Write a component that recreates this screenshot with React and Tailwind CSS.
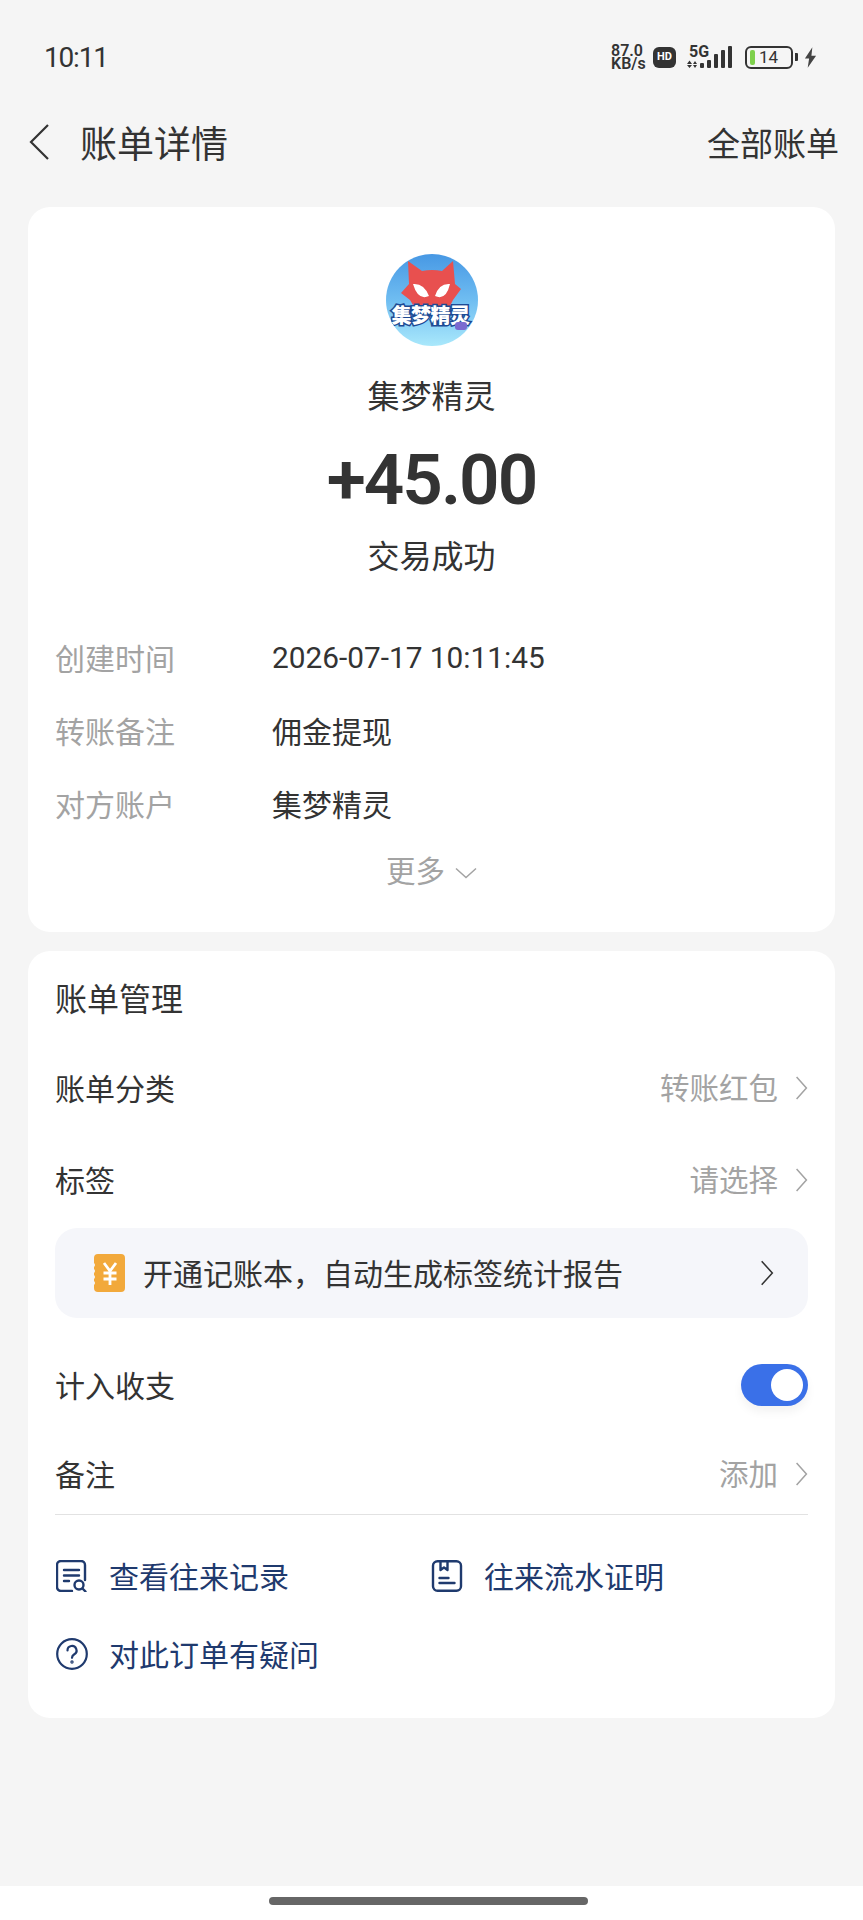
import React from 'react'

const CJK = 'font-["Noto_Sans_CJK_SC","Noto_Sans",sans-serif]'

function Chevron({ className, dir = 'right', strokeWidth = 2 }) {
  const d = dir === 'right' ? 'M3 2l9 10-9 10' : dir === 'left' ? 'M19 1L2 18l17 17' : 'M2 3l10 9 10-9'
  const vb = dir === 'left' ? '0 0 20 36' : dir === 'down' ? '1 2 22 11' : '2 1 11 22'
  return (
    <svg viewBox={vb} fill="none" stroke="currentColor" strokeWidth={strokeWidth} className={`overflow-visible ${className}`}>
      <path d={d} />
    </svg>
  )
}

function StatusBar() {
  return (
    <div className="h-[88px] pt-[41px] pl-[44px] pr-[46px] flex items-start justify-between text-[#333]">
      <span className="font-['Roboto',sans-serif] text-[28px] tracking-[-1.2px] leading-[36px] -mt-[1px]">10:11</span>
      <div className="flex items-center h-[26px] mt-[3px]">
        <div className="font-['Roboto',sans-serif] font-semibold text-[16px] leading-[13px] w-[38px] text-[#333]">
          <div>87.0</div>
          <div>KB/s</div>
        </div>
        <div className="ml-[4px] w-[23px] h-[21px] rounded-[6px] bg-[#333] text-white text-[11px] font-bold font-['Roboto',sans-serif] flex items-center justify-center">HD</div>
        <svg viewBox="0 0 48 24" className="ml-[10px] w-[48px] h-[24px] overflow-visible">
          <text x="3" y="12" fontFamily="Roboto" fontWeight="700" fontSize="16" fill="#333">5G</text>
          <g fill="#333">
            <path d="M1 19l2.500-3.500L6 19zM1 20h5l-2.500 3zM7 19l2-3 2 3zM7 20h4l-2 3z" />
            <rect x="14" y="18" width="4" height="5" rx="1" />
            <rect x="21" y="15" width="4" height="8" rx="1" />
            <rect x="28" y="9" width="4" height="14" rx="1" />
            <rect x="35" y="5" width="4" height="18" rx="1" />
            <rect x="42" y="1" width="4" height="22" rx="1" />
          </g>
        </svg>
        <div className="ml-[11px] w-[48px] h-[23px] rounded-[6px] border-2 border-[#333] flex items-center pl-[3px]">
          <div className="w-[5px] h-[15px] rounded-[2px] bg-[#7ed04c]" />
          <span className="ml-[4px] font-['Roboto',sans-serif] text-[17px] leading-none text-[#333]">14</span>
        </div>
        <div className="ml-[2px] w-[3px] h-[8px] rounded-r-[1px] bg-[#333]" />
        <svg viewBox="0 0 14 22" className="ml-[6px] w-[13px] h-[21px]">
          <path d="M9 0L1 12h4.500L4 22l9-13H8z" fill="#444" />
        </svg>
      </div>
    </div>
  )
}

function Header() {
  return (
    <div className="mt-[17px] h-[74px] flex items-center pl-[29px] pr-[24px] text-[#333]">
      <Chevron dir="left" className="w-[20px] h-[36px]" strokeWidth={2.200} />
      <h1 className="ml-[31px] text-[37px] leading-none font-normal">账单详情</h1>
      <span className="ml-auto text-[33px] leading-none">全部账单</span>
    </div>
  )
}

function Avatar() {
  return (
    <div className="relative w-[92px] h-[92px] rounded-full overflow-hidden bg-gradient-to-b from-[#4798e4] via-[#6fbdf1] to-[#a9e8fb]">
      <svg viewBox="0 0 92 92" className="absolute inset-0 w-full h-full">
        <path d="M22 7 L36 17 Q46 15 56 17 L67 7 L69 30 L75 35 L67 46 L62 56 L30 56 L24 46 L15 39 L23 30Z" fill="#e8504f" />
        <path d="M27 30 Q38 29 43 42 Q32 47 27 30Z M64 30 Q53 29 49 42 Q60 47 64 30Z" fill="#fff" />
      </svg>
      <span className={`absolute left-[6px] top-[48px] whitespace-nowrap text-[20px] leading-[26px] font-black text-white tracking-[-0.500px] [-webkit-text-stroke:3px_#1d4a94] [paint-order:stroke_fill] ${CJK}`}>集梦精灵</span>
      <div className="absolute left-[69px] top-[68px] w-[12px] h-[8px] rounded-[3px] bg-[#7b6ad0]" />
    </div>
  )
}

function InfoRow({ label, value }) {
  return (
    <div className="h-[73px] flex items-center text-[30px] leading-none">
      <span className="w-[217px] text-[#a3a3a3]">{label}</span>
      <span className="text-[#333]">{value}</span>
    </div>
  )
}

function SummaryCard() {
  return (
    <section className="bg-white rounded-[22px] h-[725px] pt-[47px] px-[27px]">
      <div className="flex flex-col items-center text-[#333]">
        <Avatar />
        <div className="mt-[29px] h-[38px] text-[32px] leading-[38px]">集梦精灵</div>
        <div className="mt-[25px] h-[84px] font-['Roboto',sans-serif] font-semibold text-[71px] tracking-[-2px] leading-[84px] text-[#333]">+45.00</div>
        <div className="mt-[13px] h-[38px] text-[32px] leading-[38px]">交易成功</div>
      </div>
      <div className="mt-[47px]">
        <InfoRow label="创建时间" value={<span className="font-['Roboto',sans-serif] text-[29.800px]">2026-07-17 10:11:45</span>} />
        <InfoRow label="转账备注" value="佣金提现" />
        <InfoRow label="对方账户" value="集梦精灵" />
      </div>
      <div className="mt-[16px] flex items-center justify-center text-[#a3a3a3] text-[29.500px] leading-none">
        <span>更多</span>
        <Chevron dir="down" className="ml-[10px] mt-[6px] w-[22px] h-[12px]" strokeWidth={1.500} />
      </div>
    </section>
  )
}

function ManageRow({ label, value, className }) {
  return (
    <div className={`flex items-center leading-none ${className}`}>
      <span className="text-[#333] text-[30px]">{label}</span>
      <span className="ml-auto text-[#a3a3a3] text-[29.500px]">{value}</span>
      <Chevron className="ml-[17px] mt-[2px] w-[13px] h-[24px] text-[#a3a3a3]" strokeWidth={1.400} />
    </div>
  )
}

function CoinIcon() {
  return (
    <svg viewBox="0 0 32 38" className="w-[32px] h-[38px]">
      <path d="M5 0h23a4 4 0 0 1 4 4v30a4 4 0 0 1-4 4H5a4 4 0 0 1-4-4v-3q2-2 0-4v-2q2-2 0-4v-2q2-2 0-4v-2q2-2 0-4V4a4 4 0 0 1 4-4z" fill="#f2a93b" />
      <path d="M11 9l6 8 6-8M10.500 19h13M10.500 25h13M17 17v14" stroke="#fff" strokeWidth="2.800" fill="none" />
    </svg>
  )
}

function RecordIcon() {
  return (
    <svg viewBox="0 0 32 32" fill="none" stroke="#1f3a6e" strokeWidth="2.400" strokeLinecap="round" strokeLinejoin="round" className="w-[32px] h-[32px]">
      <path d="M16 31H5a4 4 0 0 1-4-4V5a4 4 0 0 1 4-4h20a4 4 0 0 1 4 4v15" />
      <path d="M8 10h15M8 15.500h15M8 21h5" />
      <circle cx="23" cy="25" r="4.500" />
      <path d="M26.500 28.500L29.500 31.500" />
    </svg>
  )
}

function ProofIcon() {
  return (
    <svg viewBox="0 0 32 32" fill="none" stroke="#1f3a6e" strokeWidth="2.400" strokeLinecap="round" strokeLinejoin="round" className="w-[32px] h-[32px]">
      <rect x="2" y="1.200" width="28" height="29.600" rx="4.500" />
      <path d="M9.500 1.200V10l3.500-2.500L16.500 10V1.200M8.500 18h9M8.500 23h15" />
    </svg>
  )
}

function QuestionIcon() {
  return (
    <svg viewBox="0 0 32 32" fill="none" stroke="#1f3a6e" strokeWidth="2.200" strokeLinecap="round" className="w-[32px] h-[32px]">
      <circle cx="16" cy="16" r="14.800" />
      <path d="M11.500 12.500a4.500 4.500 0 1 1 6.800 3.800c-1.500.9-2.300 1.700-2.300 3.500" />
      <circle cx="16" cy="24" r=".6" />
    </svg>
  )
}

function LinkItem({ icon, label, className = '' }) {
  return (
    <div className={`flex items-center text-[#1f3a6e] text-[30px] leading-none ${className}`}>
      {icon}
      <span className="ml-[21px] -mt-[2px]">{label}</span>
    </div>
  )
}

function ManageCard() {
  return (
    <section className="mt-[19px] bg-white rounded-[22px] h-[767px] pt-[26px] px-[27px]">
      <h2 className="h-[40px] flex items-center text-[32px] font-normal text-[#333]">账单管理</h2>
      <ManageRow label="账单分类" value="转账红包" className="h-[40px] mt-[50px]" />
      <ManageRow label="标签" value="请选择" className="h-[40px] mt-[52px]" />
      <div className="mt-[29px] h-[90px] rounded-[22px] bg-[#f5f6fa] flex items-center pl-[38px] pr-[34px] text-[#333]">
        <CoinIcon />
        <span className="ml-[18px] -mt-[2px] text-[30px] leading-none">开通记账本，自动生成标签统计报告</span>
        <Chevron className="ml-auto w-[14px] h-[26px]" strokeWidth={1.300} />
      </div>
      <div className="h-[40px] mt-[46px] flex items-center justify-between text-[30px] leading-none text-[#333]">
        <span>计入收支</span>
        <div className="mt-[2px] w-[67px] h-[42px] rounded-full bg-[#3a70e8] flex items-center justify-end pr-[5px] shadow-[0_6px_10px_rgba(0,0,0,0.05)]">
          <div className="w-[32px] h-[32px] rounded-full bg-white" />
        </div>
      </div>
      <ManageRow label="备注" value="添加" className="h-[40px] mt-[49px]" />
      <div className="mt-[21px] h-px bg-[#e2e2e2]" />
      <div className="mt-[45px] flex">
        <LinkItem icon={<RecordIcon />} label="查看往来记录" className="w-[376px] pl-[1px]" />
        <LinkItem icon={<ProofIcon />} label="往来流水证明" />
      </div>
      <LinkItem icon={<QuestionIcon />} label="对此订单有疑问" className="mt-[46px] pl-[1px]" />
    </section>
  )
}

export default function App() {
  return (
    <div className={`w-[863px] h-[1920px] bg-[#f5f5f5] flex flex-col overflow-hidden ${CJK}`}>
      <StatusBar />
      <Header />
      <main className="mt-[28px] px-[28px]">
        <SummaryCard />
        <ManageCard />
      </main>
      <div className="mt-auto h-[34px] bg-white pt-[11px] pl-[269px]">
        <div className="w-[319px] h-[8px] rounded-full bg-[#666]" />
      </div>
    </div>
  )
}
